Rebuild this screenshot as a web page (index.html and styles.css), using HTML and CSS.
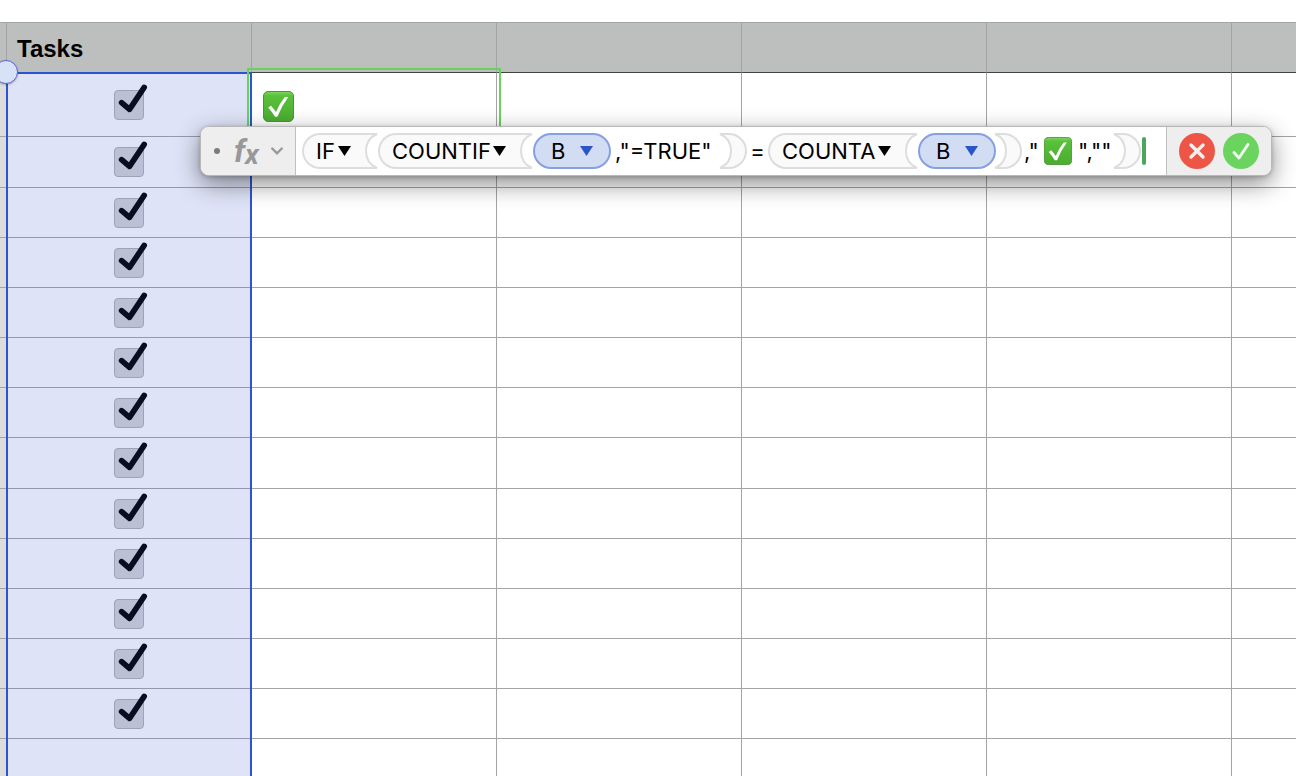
FILE: index.html
```html
<!DOCTYPE html>
<html lang="en">
<head>
    <meta charset="UTF-8">
    <meta name="viewport" content="width=device-width, initial-scale=1.0">
    <title>Tasks</title>
    <link rel="stylesheet" href="styles.css">
</head>
<body>
    <!-- shared shapes -->
    <svg class="defs" aria-hidden="true">
        <linearGradient id="green" x1="0" y1="0" x2="0" y2="1">
            <stop offset="0" stop-color="#7fd45f"/>
            <stop offset="0.15" stop-color="#58c13a"/>
            <stop offset="1" stop-color="#4cab31"/>
        </linearGradient>
        <symbol id="tick" viewBox="0 0 36 36">
            <path d="M7.6 18.6 15.500 25.400 30.200 3.400" fill="none" stroke="#080d20" stroke-width="5.600" stroke-linecap="round" stroke-linejoin="round"/>
        </symbol>
        <symbol id="emoji" viewBox="0 0 31 31">
            <rect x="0.5" y="0.5" width="30" height="30" rx="4.5" fill="url(#green)" stroke="#479a30"/>
            <path d="M5.200 16.500 8 14.800Q10.500 17.500 13 21 16.500 12.500 21.800 6L25.300 6Q18.500 15 14.400 25.800L12 25.800Q9 20.800 5.200 16.500Z" fill="#fff"/>
        </symbol>
        <symbol id="cap" viewBox="0 0 13 36">
            <path d="M0 1H12C5 4 1 10 1 18S5 32 12 35H0" fill="#fafafa" stroke="#ddd" stroke-width="2"/>
        </symbol>
        <symbol id="close" viewBox="0 0 28 36">
            <path d="M1 1H10A17 17 0 0 1 10 35H1C8 32 12 26 12 18S8 4 1 1Z" fill="#fafafa" stroke="#ddd" stroke-width="2"/>
        </symbol>
        <symbol id="down" viewBox="0 0 13 10">
            <path d="M0 0H13L6.5 10Z" fill="currentColor"/>
        </symbol>
    </svg>

    <main class="sheet">
        <table>
            <colgroup>
                <col class="col-edge">
                <col class="col"><col class="col"><col class="col"><col class="col"><col class="col">
                <col>
            </colgroup>
            <thead>
                <tr><th></th><th scope="col">Tasks</th><th></th><th></th><th></th><th></th><th></th></tr>
            </thead>
            <tbody>
                <tr class="first"><td></td><td><label class="check"><input type="checkbox" checked aria-label="Task 1"><svg><use href="#tick"/></svg></label></td><td class="result"><svg role="img" aria-label="Done"><use href="#emoji"/></svg></td><td></td><td></td><td></td><td></td></tr>
                <tr class="tall"><td></td><td><label class="check"><input type="checkbox" checked aria-label="Task 2"><svg><use href="#tick"/></svg></label></td><td></td><td></td><td></td><td></td><td></td></tr>
                <tr><td></td><td><label class="check"><input type="checkbox" checked aria-label="Task 3"><svg><use href="#tick"/></svg></label></td><td></td><td></td><td></td><td></td><td></td></tr>
                <tr><td></td><td><label class="check"><input type="checkbox" checked aria-label="Task 4"><svg><use href="#tick"/></svg></label></td><td></td><td></td><td></td><td></td><td></td></tr>
                <tr><td></td><td><label class="check"><input type="checkbox" checked aria-label="Task 5"><svg><use href="#tick"/></svg></label></td><td></td><td></td><td></td><td></td><td></td></tr>
                <tr><td></td><td><label class="check"><input type="checkbox" checked aria-label="Task 6"><svg><use href="#tick"/></svg></label></td><td></td><td></td><td></td><td></td><td></td></tr>
                <tr><td></td><td><label class="check"><input type="checkbox" checked aria-label="Task 7"><svg><use href="#tick"/></svg></label></td><td></td><td></td><td></td><td></td><td></td></tr>
                <tr class="tall"><td></td><td><label class="check"><input type="checkbox" checked aria-label="Task 8"><svg><use href="#tick"/></svg></label></td><td></td><td></td><td></td><td></td><td></td></tr>
                <tr><td></td><td><label class="check"><input type="checkbox" checked aria-label="Task 9"><svg><use href="#tick"/></svg></label></td><td></td><td></td><td></td><td></td><td></td></tr>
                <tr><td></td><td><label class="check"><input type="checkbox" checked aria-label="Task 10"><svg><use href="#tick"/></svg></label></td><td></td><td></td><td></td><td></td><td></td></tr>
                <tr><td></td><td><label class="check"><input type="checkbox" checked aria-label="Task 11"><svg><use href="#tick"/></svg></label></td><td></td><td></td><td></td><td></td><td></td></tr>
                <tr><td></td><td><label class="check"><input type="checkbox" checked aria-label="Task 12"><svg><use href="#tick"/></svg></label></td><td></td><td></td><td></td><td></td><td></td></tr>
                <tr><td></td><td><label class="check"><input type="checkbox" checked aria-label="Task 13"><svg><use href="#tick"/></svg></label></td><td></td><td></td><td></td><td></td><td></td></tr>
                <tr><td></td><td></td><td></td><td></td><td></td><td></td><td></td></tr>
            </tbody>
        </table>

        <div class="selection"></div>
        <div class="active-cell"></div>
        <div class="handle"></div>

        <div class="formula-bar">
            <div class="fx-menu">
                <span class="dot"></span>
                <button class="fx" type="button" aria-label="Formula menu">
                    <span class="f">f</span><span class="x">x</span>
                    <svg class="chevron" viewBox="0 0 12 8"><path d="M1.200 1.500 6 6.300 10.800 1.500" fill="none" stroke="#98989b" stroke-width="2.300" stroke-linecap="round"/></svg>
                </button>
            </div>
            <div class="formula">
                <button class="fn fn-if" type="button">IF<svg class="down"><use href="#down"/></svg></button><svg class="cap"><use href="#cap"/></svg>
                <button class="fn fn-countif" type="button">COUNTIF<svg class="down"><use href="#down"/></svg></button><svg class="cap"><use href="#cap"/></svg>
                <button class="ref" type="button">B<svg class="down"><use href="#down"/></svg></button>
                <span class="criteria">,"=TRUE"</span>
                <svg class="close"><use href="#close"/></svg>
                <span class="equals">=</span>
                <button class="fn fn-counta" type="button">COUNTA<svg class="down"><use href="#down"/></svg></button><svg class="cap"><use href="#cap"/></svg>
                <button class="ref" type="button">B<svg class="down"><use href="#down"/></svg></button>
                <svg class="close close-tight"><use href="#close"/></svg>
                <span class="open-quote">,"</span>
                <svg class="emoji" role="img" aria-label="Done"><use href="#emoji"/></svg>
                <span class="tail">",""</span>
                <svg class="close"><use href="#close"/></svg>
                <span class="caret"></span>
            </div>
            <div class="actions">
                <button class="cancel" type="button" aria-label="Cancel">
                    <svg viewBox="0 0 36 36"><path d="M12 12 24 24M24 12 12 24" stroke="#f3efef" stroke-width="3.400" stroke-linecap="round"/></svg>
                </button>
                <button class="accept" type="button" aria-label="Accept">
                    <svg viewBox="0 0 36 36"><path d="M11 19.500 16 25 25 11.500" fill="none" stroke="#f0f4ef" stroke-width="3" stroke-linecap="round" stroke-linejoin="round"/></svg>
                </button>
            </div>
        </div>
    </main>
</body>
</html>
```

FILE: styles.css
```css
* {
    box-sizing: border-box;
}
body {
    margin: 0;
    padding-top: 22px;
    height: 100vh;
    overflow: hidden;
    background: #fff;
    font-family: Inter, "Liberation Sans", sans-serif;
    color: #000;
}
button {
    margin: 0;
    padding: 0;
    border: none;
    background: none;
    font: inherit;
    color: inherit;
}
svg {
    display: block;
    flex: none;
}
.defs {
    position: absolute;
    width: 0;
    height: 0;
}
.sheet {
    position: relative;
}

/* table */
table {
    width: 100%;
    table-layout: fixed;
    border-collapse: separate;
    border-spacing: 0;
}
.col-edge {
    width: 7px;
}
.col {
    width: 245px;
}
th, td {
    padding: 0;
    border-right: 1px solid #a4a4a4;
    border-bottom: 1px solid #a4a4a4;
}
th:last-child, td:last-child {
    border-right: none;
}
th {
    height: 51px;
    padding: 2px 0 0 10px;
    border-top: 1px solid #a4a4a4;
    border-bottom-color: #444;
    background: #bdbfbe;
    font-family: "Liberation Sans", sans-serif;
    font-size: 24px;
    text-align: left;
}
th:first-child {
    padding: 0;
}
td {
    height: 50px;
}
.first td {
    height: 64px;
}
.tall td {
    height: 51px;
}
td:first-child {
    background: #dcdcdc;
}
td:nth-child(2) {
    background: #dee3f7;
    border-bottom-color: #9599af;
}
.result {
    padding: 4px 0 0 11px;
}
.result svg {
    width: 31px;
    height: 31px;
}

/* checkboxes */
.check {
    position: relative;
    display: block;
    width: 30px;
    height: 30px;
    margin: 0 auto;
}
.check input {
    appearance: none;
    display: block;
    width: 30px;
    height: 30px;
    margin: 0;
    border: 1px solid #9da2b7;
    border-radius: 4px;
    background: #bac0d5;
}
.check svg {
    position: absolute;
    left: 0;
    top: -6px;
    width: 36px;
    height: 36px;
    pointer-events: none;
}
.check input:not(:checked) + svg {
    display: none;
}

/* selection */
.selection {
    position: absolute;
    left: 6px;
    top: 50px;
    bottom: 0;
    width: 246px;
    border: 2px solid #2b55d0;
    border-bottom: none;
    pointer-events: none;
}
.handle {
    position: absolute;
    left: -6px;
    top: 38px;
    width: 24px;
    height: 24px;
    border: 1px solid #5866e0;
    border-radius: 50%;
    background: #d8e2f7;
    box-shadow: 0 1px 2px rgba(0, 0, 0, 0.25);
}
.active-cell {
    position: absolute;
    left: 247px;
    top: 46px;
    width: 254px;
    height: 72px;
    border: 2px solid #67d35b;
    pointer-events: none;
}

/* formula bar */
.formula-bar {
    position: absolute;
    left: 200px;
    right: 24px;
    top: 104px;
    display: flex;
    height: 50px;
    border: 1px solid #b8b8b8;
    border-radius: 9px;
    background: #fff;
    box-shadow: 0 8px 24px rgba(0, 0, 0, 0.45), 0 1px 4px rgba(0, 0, 0, 0.2);
    font-size: 22px;
    line-height: 36px;
}
.fx-menu {
    display: flex;
    align-items: center;
    width: 95px;
    padding-left: 13px;
    border-right: 1px solid #c0c0c0;
    border-radius: 8px 0 0 8px;
    background: #eee;
}
.dot {
    width: 6px;
    height: 6px;
    margin-right: 14px;
    border-radius: 50%;
    background: #7c7c7c;
}
.fx {
    display: flex;
    align-items: center;
    font-family: Roboto, "Liberation Sans", sans-serif;
    font-style: italic;
    font-weight: 700;
    color: #98989b;
}
.f {
    width: 11px;
    font-size: 32px;
}
.x {
    width: 14px;
    padding-top: 8px;
    font-size: 28px;
}
.chevron {
    width: 12px;
    height: 8px;
    margin-left: 12px;
}
.formula {
    display: flex;
    flex: 1;
    align-items: center;
    padding-left: 6px;
    white-space: nowrap;
}
.down {
    width: 13px;
    height: 10px;
}
.fn {
    display: flex;
    justify-content: space-between;
    align-items: center;
    height: 36px;
    padding: 0 14px 0 12px;
    border: 2px solid #ddd;
    border-right: none;
    border-radius: 18px 0 0 18px;
    background: #fafafa;
    line-height: 32px;
}
.fn-if {
    width: 63px;
}
.fn-countif {
    width: 142px;
}
.fn-counta {
    width: 137px;
}
.cap {
    width: 13px;
    height: 36px;
}
.ref {
    display: flex;
    justify-content: space-between;
    align-items: center;
    width: 78px;
    height: 36px;
    padding: 0 16px;
    border: 2px solid #86a1e2;
    border-radius: 18px;
    background: #d2dcf2;
    line-height: 32px;
}
.ref .down {
    color: #2a55c8;
}
.close {
    width: 28px;
    height: 36px;
}
.close-tight {
    margin-left: -2px;
}
.criteria {
    width: 108px;
    padding-left: 4px;
}
.equals {
    width: 21px;
    text-align: center;
}
.open-quote {
    width: 22px;
    padding-left: 2px;
}
.emoji {
    width: 28px;
    height: 28px;
}
.tail {
    width: 41px;
    padding-left: 6px;
}
.caret {
    width: 4px;
    height: 28px;
    margin-left: 1px;
    border-radius: 2px;
    background: #4ba55b;
}
.actions {
    display: flex;
    align-items: center;
    gap: 8px;
    padding: 0 12px;
    border-left: 1px solid #c0c0c0;
    border-radius: 0 8px 8px 0;
    background: #eee;
}
.cancel, .accept {
    width: 36px;
    height: 36px;
    border-radius: 50%;
}
.cancel {
    background: #ed5647;
}
.accept {
    background: #6ad45f;
}
```
